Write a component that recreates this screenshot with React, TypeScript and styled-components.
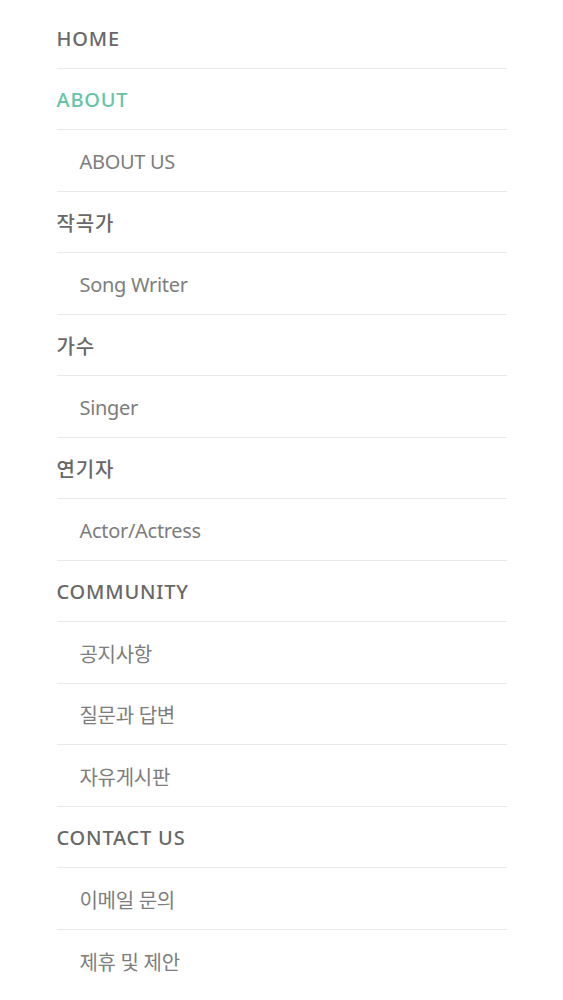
import React from "react";
import styled, { createGlobalStyle } from "styled-components";

const Global = createGlobalStyle`
  html, body { margin: 0; padding: 0; background: #ffffff; }
  body { font-family: "Noto Sans", "Noto Sans CJK KR", sans-serif; }
`;

const Nav = styled.nav`
  width: 450px;
  margin: 0 auto;
  padding-top: 7px;
`;

const List = styled.ul`
  list-style: none;
  margin: 0;
  padding: 0;
`;

const Item = styled.li<{ $sub?: boolean; $active?: boolean; $last?: boolean }>`
  display: flex;
  align-items: center;
  box-sizing: border-box;
  height: 61.5px;
  padding-left: ${(p) => (p.$sub ? "23px" : "0")};
  padding-top: 2px;
  border-bottom: ${(p) => (p.$last ? "none" : "1px solid #e9e9e9")};
  font-size: 20px;
  font-weight: ${(p) => (p.$sub ? 400 : 500)};
  color: ${(p) => (p.$active ? "#66c4a6" : p.$sub ? "#7d7d7d" : "#686868")};
  letter-spacing: ${(p) => (p.$sub ? "-0.3px" : "0.8px")};
`;

type Entry = { label: string; sub?: boolean; active?: boolean };

const entries: Entry[] = [
  { label: "HOME" },
  { label: "ABOUT", active: true },
  { label: "ABOUT US", sub: true },
  { label: "작곡가" },
  { label: "Song Writer", sub: true },
  { label: "가수" },
  { label: "Singer", sub: true },
  { label: "연기자" },
  { label: "Actor/Actress", sub: true },
  { label: "COMMUNITY" },
  { label: "공지사항", sub: true },
  { label: "질문과 답변", sub: true },
  { label: "자유게시판", sub: true },
  { label: "CONTACT US" },
  { label: "이메일 문의", sub: true },
  { label: "제휴 및 제안", sub: true },
];

export default function App() {
  return (
    <>
      <Global />
      <Nav>
        <List>
          {entries.map((e, i) => (
            <Item key={e.label} $sub={e.sub} $active={e.active} $last={i === entries.length - 1}>
              {e.label}
            </Item>
          ))}
        </List>
      </Nav>
    </>
  );
}
